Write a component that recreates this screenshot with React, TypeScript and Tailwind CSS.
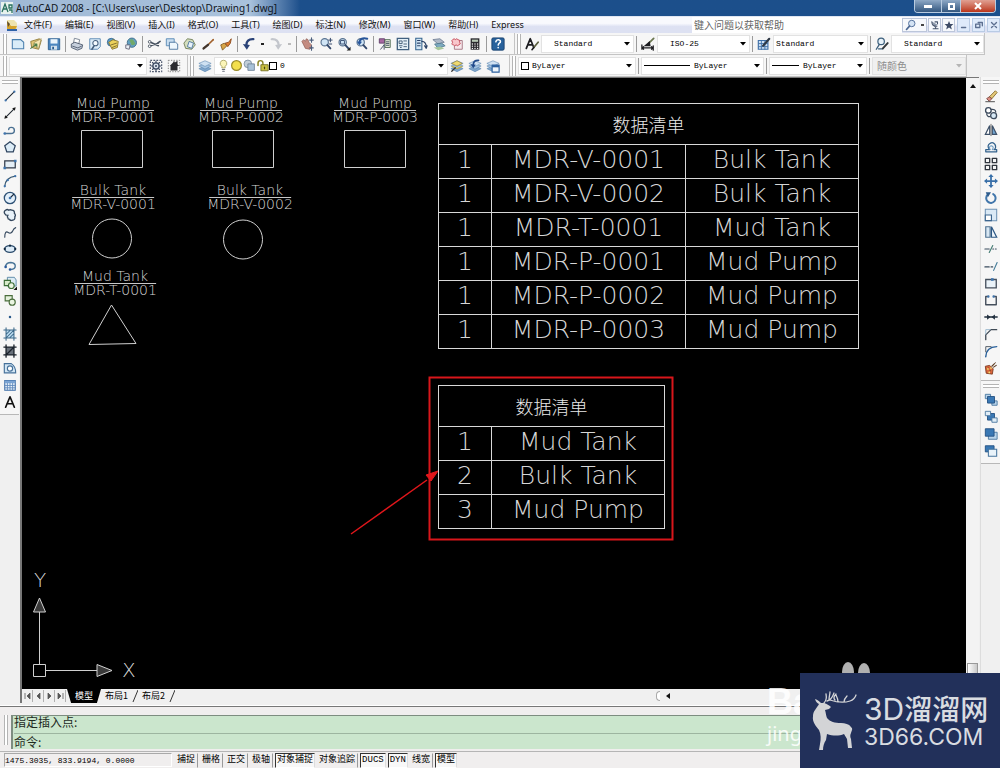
import type { ReactNode } from "react";

const P = "#2b3f63";
const B = "#3f74ad";

const stroke = (d: string, color = P, w = 1.4) => (
  <path d={d} fill="none" stroke={color} strokeWidth={w} strokeLinecap="round" strokeLinejoin="round" />
);

const lens = (
  <>
    <circle cx="6.5" cy="6" r="4.2" fill="#cfe4f5" stroke="#5a7390" strokeWidth="1.3" />
    {stroke("M9.6 9.2 13 13", "#33486b", 2.2)}
  </>
);

const layers = (
  <>
    <path d="M1 11 8 8l7 3-7 3.500z" fill="#7fa6cc" stroke="#4f7ba8" strokeWidth=".6" />
    <path d="M1 8 8 5l7 3-7 3.500z" fill="#a5c4e2" stroke="#4f7ba8" strokeWidth=".6" />
    <path d="M1 5 8 2l7 3-7 3.500z" fill="#cfe1f2" stroke="#4f7ba8" strokeWidth=".6" />
  </>
);

const icons: Record<string, ReactNode> = {
  new: <path d="M1.500 3h9.500l3.500 3v7.500h-13z" fill="#d9ecf8" stroke="#4a7fae" strokeWidth="1.2" />,
  open: (
    <>
      <path d="M2 5 12 2l2 2-3 10-8-2z" fill="#e3c979" stroke="#8d7733" />
      <path d="M6 6 14 2l-3 11-6-3z" fill="#f7e9b4" stroke="#9a8850" strokeWidth=".8" />
      {stroke("M2 13 9 8M9 8H6M9 8v3", "#4b7c46", 1.2)}
    </>
  ),
  save: (
    <>
      <path d="M1.500 2h13v12.500h-13z" fill="#4c86bf" stroke="#285b8e" />
      <path d="M4 2.500h8v5H4z" fill="#eaf4fb" />
      <path d="M4.500 10h7v4.500h-7z" fill="#d3e1ed" />
      <path d="M6 11h2v3H6z" fill="#285b8e" />
    </>
  ),
  print: (
    <>
      <path d="M5 1.500 11 3l-1 5-6-1z" fill="#fff" stroke="#6f7a8a" />
      <path d="m1.500 8 4-2 9 3-1 4-5 2-7-3z" fill="#c6cfdc" stroke="#4d586b" />
      {stroke("M3 10.500 9 12.500l4-2", "#4d586b", 1)}
    </>
  ),
  preview: (
    <>
      <path d="M2 2h12v9l-3 3H2z" fill="#dcecf8" stroke="#5283b0" />
      <circle cx="8.500" cy="7" r="3" fill="#f4fafe" stroke="#45607e" strokeWidth="1.200" />
      {stroke("M7 10 4.500 14", "#45607e", 1.8)}
    </>
  ),
  publish: (
    <>
      <circle cx="6" cy="6" r="4.500" fill="#5b9fd0" stroke="#39678e" />
      <path d="m3 6 5-3 6 2-1 7-6 2z" fill="#ebd15b" stroke="#84712c" />
      {stroke("M6 9 12 7M7 12l5-2", "#79662a", 1)}
    </>
  ),
  globe: (
    <>
      <circle cx="9" cy="6.500" r="5.300" fill="#63a0c2" stroke="#3d6a86" />
      <path d="M6 4q3-3 5 0t2 4q-4 3-5 0t-2-4z" fill="#71a96a" />
      <path d="m2 9 5 0-1 5-4-1z" fill="#e9eef4" stroke="#667" />
    </>
  ),
  cut: (
    <>
      {stroke("M4 6 13 10M4 10l9-3M12 7l3-2", "#444f5d", 1.7)}
      <circle cx="3" cy="5.500" r="1.500" fill="#fff" stroke="#444f5d" />
      <circle cx="3" cy="10.500" r="1.500" fill="#fff" stroke="#444f5d" />
    </>
  ),
  copy: (
    <>
      <path d="M1.500 2h9v8h-9z" fill="#c9def0" stroke="#5486b2" />
      <path d="M5 6h7l2.500 2v6H5z" fill="#eef7fd" stroke="#47719c" />
    </>
  ),
  paste: (
    <>
      <path d="m5 2 6 1 3 6-4 5-7-1-2-6z" fill="#d5dfbf" stroke="#6b7a53" />
      <path d="m7 5 5 2-2 6-5-2z" fill="#e8f3fb" stroke="#47719c" />
    </>
  ),
  brush: (
    <>
      {stroke("M14 3 9 8", "#a1612c", 1.8)}
      {stroke("M8 9 3 13", "#42342b", 2.8)}
    </>
  ),
  matchprop: (
    <>
      <path d="M2 9 6 7l3 3-5 5z" fill="#d8a648" stroke="#82602a" />
      <path d="m7 7 4-1 3-4-1 5-3 4z" fill="#df7e2e" stroke="#8b4a1e" />
    </>
  ),
  undo: (
    <>
      {stroke("M13 2.500Q5.500 2 5 9", "#2a4277", 2.6)}
      <path d="m1 8 8 1-3.500 5.500z" fill="#2a4277" />
    </>
  ),
  redo: (
    <>
      {stroke("M3 2.500Q10.500 2 11 9", "#c3c6cc", 2.4)}
      <path d="m15 8-8 1 3.500 5.500z" fill="#c3c6cc" />
    </>
  ),
  pan: (
    <>
      <path d="M1 5 3 3l2 2 1-3 2 1 1 3 3 3v3l-2 2-5-1-2-4z" fill="#c48c81" stroke="#8f5e56" strokeWidth=".8" />
      {stroke("M12 1v5M10 3.500h4M12 10v5M10 12.500h4", "#4d5f7d", 1.3)}
    </>
  ),
  zoomrt: (
    <>
      {lens}
      {stroke("M13 1.500v4M11 3.500h4M11.500 8h3", "#33486b", 1.1)}
    </>
  ),
  zoomwin: (
    <>
      {lens}
      {stroke("M4.500 4h4v4h-4z", "#33486b", 1)}
      <path d="m15.500 11v4.500H11z" fill="#222" />
    </>
  ),
  zoomprev: (
    <>
      {lens}
      {stroke("M14 2Q6 0 5 6", "#27559a", 2.2)}
      <path d="m2 5 6 .500-3 4z" fill="#27559a" />
    </>
  ),
  props: (
    <>
      <path d="M1.500 2h6v5h-6z" fill="#a668a0" stroke="#5f3e68" />
      <path d="M8 3h6v9H8z" fill="#e2ebd8" stroke="#4f6b52" />
      {stroke("M9.500 5.500h3M9.500 7.500h3M9.500 9.500h3M3 14l4-5M7 14V9", "#394759", 1)}
    </>
  ),
  dcenter: (
    <>
      <path d="M1.500 1.500h13v13h-13z" fill="#e3eff7" stroke="#41607f" strokeWidth="1.500" />
      {stroke("M4 4.500h3v3H4zM4 10h3M9 4.500h3M9 8h3M9 11h3M5 12h1", "#3a556f", 1)}
    </>
  ),
  palettes: (
    <>
      <path d="M2 1.500h7v13H2z" fill="#d2e5f4" stroke="#35648f" strokeWidth="1.200" />
      {stroke("M4 4h3M4 7h3M4 10h3M9 5q5 0 5 7M12 10l2 3 1-3", "#2d4468", 1.3)}
    </>
  ),
  sheets: (
    <>
      <path d="m1 3 8-1 5 4-7 2z" fill="#aeb9c8" stroke="#728096" />
      <path d="m3 8 8-1 4 3-8 3z" fill="#7daac0" stroke="#507a90" />
      <path d="m2 12 8-1 4 2-7 2z" fill="#a7c79c" />
    </>
  ),
  markup: (
    <>
      <path d="M5 4h9v10H5z" fill="#f6e8ec" stroke="#a1707e" />
      <path d="M3 3q2-2 3 0 2-2 3 0 3 0 2 3 2 2-1 3-1 2-3 0-2 2-3 0-3 0-1-3-2-2 0-3z" fill="#f8c6cb" stroke="#c24150" />
    </>
  ),
  calc: (
    <>
      <path d="M3 1.500h10v13H3z" fill="#2b2b30" />
      <path d="M4.500 3h7v2.500h-7z" fill="#b8c9b6" />
      {stroke("M5 8h0M8 8h0M11 8h0M5 10.500h0M8 10.500h0M11 10.500h0M5 13h0M8 13h0M11 13h0", "#fff", 1.5)}
    </>
  ),
  help: (
    <>
      <rect x="1" y="1" width="14" height="14" rx="1.500" fill="#28629c" stroke="#173f6c" />
      {stroke("M5.500 5.500q.500-2.500 3-2.300 3 .500 2 3-2 1.300-2.300 3M8.200 12v.300", "#fff", 1.8)}
    </>
  ),
  textstyle: (
    <>
      {stroke("M1.500 13 6 2l4 10M3.500 9h5", "#1c1c20", 2)}
      {stroke("M15 6 10 12", "#5c6040", 2)}
      {stroke("M10 12l-2 2.500", "#1c1c20", 1.8)}
    </>
  ),
  dimstyle: (
    <>
      {stroke("M1 9v5M14 10v5M1 12.500h13M3 11 1 12.500 3 14M12 11l2 1.500-2 1.500", "#1c1c20", 1.4)}
      {stroke("M14.500 1.500 9 7", "#6b7750", 2)}
      <path d="m3 10.500 7-6 1 6z" fill="#1c1c20" />
    </>
  ),
  tablestyle: (
    <>
      <path d="M1.500 4h11v10h-11z" fill="#cfe1f3" stroke="#3f70a8" strokeWidth="1.300" />
      {stroke("M2 7.500h10M2 11h10M5 4v10M9 4v10", "#3f70a8", 1)}
      {stroke("M14 2 7 10", "#2e3844", 2.4)}
    </>
  ),
  leaderstyle: (
    <>
      <circle cx="7" cy="5" r="3.700" fill="#e9f3fa" stroke="#3d607d" strokeWidth="1.400" />
      {stroke("M5 8.500 1.500 14M4 13.500h5", "#3d607d", 1.5)}
      {stroke("M14.500 7 9 13", "#33383c", 2.2)}
    </>
  ),
  gear: (
    <>
      <path d="M1.500 1.500h13v13h-13z" fill="none" stroke="#49536a" strokeDasharray="2 1.500" strokeWidth="1.300" />
      <circle cx="8" cy="8" r="3.600" fill="#dce4ee" stroke="#3d4a63" strokeWidth="1.500" />
      {stroke("M8 2.500v2M8 11.500v2M2.500 8h2M11.500 8h2M4 4l1.500 1.500M12 4l-1.500 1.500M4 12l1.500-1.500M12 12l-1.500-1.500", "#3d4a63", 1.3)}
      <circle cx="8" cy="8" r="1.200" fill="#3d4a63" />
    </>
  ),
  wshome: (
    <>
      <path d="M1.500 1.500h13v13h-13z" fill="none" stroke="#777" strokeDasharray="1.500 1.500" />
      <path d="M3 8 7 4l1-2 1 2 3-2v4l2 2h-2v5H4V8z" fill="#2b2b2f" />
    </>
  ),
  layers,
  layermake: (
    <>
      {layers}
      <path d="m2 5 6-3 6 3-6 3z" fill="#efd970" stroke="#8a7a2c" strokeWidth=".7" />
      <path d="m2 8.500 6 2.500 6-2.500" fill="none" stroke="#c7b34a" strokeWidth="1.500" />
      {stroke("M6 10 2 14", "#333", 1.4)}
    </>
  ),
  layerprev: (
    <>
      {layers}
      {stroke("M12 1.500Q6 1 6 7", "#234c8c", 2)}
      <path d="m3 6 6 .500-3 4z" fill="#234c8c" />
    </>
  ),
  layerstate: (
    <>
      {layers}
      <path d="M7 7h8v8H7z" fill="#eef6fc" stroke="#2a5f9e" strokeWidth="1.300" />
      <path d="M7 7h8v2.500H7z" fill="#2a5f9e" />
    </>
  ),
  bulb: (
    <>
      <path d="M8 1.500a4 4 0 0 1 2 7.500v2H6V9a4 4 0 0 1 2-7.500z" fill="#fbf5b8" stroke="#a19b58" />
      {stroke("M6.500 13h3M7 15h2", "#6a6f7c", 1.3)}
    </>
  ),
  sun: <circle cx="8" cy="8" r="6" fill="#f3df4c" stroke="#9b8c2a" strokeWidth="1.500" />,
  freeze: (
    <>
      <circle cx="6" cy="6" r="4.700" fill="#c1ced9" stroke="#73889b" />
      <path d="M6 6h8v8H6z" fill="#a9c2d9" stroke="#6a7f94" />
    </>
  ),
  lock: (
    <>
      {stroke("M2.500 8V5q0-3 3-3t3 3v2", "#8b8525", 1.8)}
      <path d="M6 7h9v7.500H6z" fill="#c9c043" stroke="#6c671e" />
      {stroke("M10.500 10v2", "#4b4814", 1.4)}
    </>
  ),
  line: (
    <>
      {stroke("M3 13 13 3", "#222a33", 1.3)}
      <circle cx="3" cy="13" r="1.300" fill={B} />
      <circle cx="13" cy="3" r="1.300" fill={B} />
    </>
  ),
  xline: (
    <>
      {stroke("M3 13 13 3", "#222a33", 1.3)}
      <path d="m1.500 14.500 1-4 3 3zM14.500 1.500l-1 4-3-3z" fill="#1a1a1a" />
    </>
  ),
  pline: (
    <>
      {stroke("M2 12h7q4 0 4-3.500T9.500 5q-3 0-3 2.500", "#4a7092", 1.6)}
      {stroke("M2 12h0", B, 3)}
    </>
  ),
  polygon: <path d="m8 2 6 4.500-2.300 7H4.300L2 6.500z" fill="#dcecf7" stroke="#2f4560" strokeWidth="1.400" />,
  rect: (
    <>
      <path d="M2 4.500h12v8H2z" fill="#e4eef6" stroke="#303a4a" strokeWidth="1.400" />
      <path d="M.500 11h3v3h-3zM12.500 3h3v3h-3z" fill={B} />
    </>
  ),
  arc: (
    <>
      {stroke("M2 14Q3 4 14 2.500", "#3a5a73", 1.5)}
      {stroke("M2 14h0M5.500 7h0M14 2.500h0", B, 2.6)}
    </>
  ),
  circle: (
    <>
      <circle cx="8" cy="8" r="6.500" fill="#e2effa" stroke="#2f5276" strokeWidth="1.500" />
      {stroke("M8 8 12 4", "#1d2c3e", 1.3)}
      {stroke("M8 8h0", B, 3)}
    </>
  ),
  cloud: (
    <path
      d="M3 2.500q2-1.500 3.500 0 2-1 3.500 0 3.500 0 3 3.500 2 2 .500 4 .500 4-3 4-2 1-3-1-2 0-2-2-1-1 0-2.500-3 0-3.500-2Q.500 4 3 2.500z"
      fill="#e8f1f8"
      stroke="#33465c"
      strokeWidth="1.500"
    />
  ),
  spline: stroke("M2 14Q2 6 6 8.500q3 2 5-1.500 1-3 3.500-4", "#384b60", 1.3),
  ellipse: (
    <>
      <ellipse cx="8" cy="8" rx="6" ry="3.800" fill="#dcebf7" stroke="#27486a" strokeWidth="1.500" />
      {stroke("M2 8h0M8 4.200h0M14 8h0", "#12283f", 2.6)}
    </>
  ),
  ellipsearc: (
    <>
      {stroke("M3 8q1-4 6-4 5 .500 5 4t-5 4", "#4a7597", 1.6)}
      {stroke("M3 9h0M8 12h0", "#2a5a9c", 3)}
    </>
  ),
  insert: (
    <>
      <path d="M5 1.500h8l2 3v7H5z" fill="#dcebf5" stroke="#5583a4" />
      <path d="M1.500 5h7v6h-7z" fill="#d8eacb" stroke="#3c6d37" strokeWidth="1.300" />
      <circle cx="9.500" cy="11" r="3.300" fill="#eaf5e2" stroke="#3c6d37" strokeWidth="1.300" />
      <path d="m16 12v4h-4z" fill="#111" />
    </>
  ),
  block: (
    <>
      <path d="M2.500 3h8v6h-8z" fill="#e4f1dc" stroke="#4a6d3c" strokeWidth="1.300" />
      <circle cx="10.500" cy="10.500" r="3.500" fill="#eaf5e2" stroke="#4a6d3c" strokeWidth="1.300" />
    </>
  ),
  point: <circle cx="8" cy="8" r="1.400" fill="#2a5a8c" />,
  hatch: (
    <>
      <path d="M3.500 3.500h9v9h-9z" fill="#bcdcf0" />
      {stroke("M3.500 1v14M12.500 1v14M1 3.500h14M1 12.500h14M4 8l4-4M4 12l8-8M8 12l4-4", "#3b6889", 1.2)}
    </>
  ),
  gradient: (
    <>
      <path d="M3.500 3.500h9v9h-9z" fill="#68707a" />
      {stroke("M3.500 1v14M12.500 1v14M1 3.500h14M1 12.500h14M4 12l8-8", "#1b222b", 1.5)}
    </>
  ),
  region: (
    <>
      <path d="M1.500 3h8q5 3 5 10.500h-13z" fill="#d3e6f4" stroke="#46719a" strokeWidth="1.300" />
      <circle cx="8" cy="8.500" r="3" fill="#fff" stroke="#46719a" strokeWidth="1.300" />
    </>
  ),
  table: (
    <>
      <path d="M2 3h12v11H2z" fill="#eaf3fb" stroke="#3f6ea6" strokeWidth="1.200" />
      <path d="M2 3h12v3H2z" fill="#7ba4d4" />
      {stroke("M2 8.500h12M2 11.200h12M5 6v8M8 6v8M11 6v8", "#5d87ba", 1)}
    </>
  ),
  mtext: stroke("M3 14 8 2l5 12M4.500 10h7", "#111", 1.9),
  erase: (
    <>
      <path d="m6 9 7-7 2 2-6 7z" fill="#e4c878" stroke="#816829" />
      <path d="m3 11 3-2 3 2-3 3z" fill="#de8f84" stroke="#7c4640" />
      {stroke("M2 14.500h10", "#3a3a3a", 1)}
    </>
  ),
  copyobj: (
    <>
      <circle cx="5" cy="5" r="3.200" fill="#fff" stroke="#3d4b5d" strokeWidth="1.500" />
      <circle cx="11" cy="11" r="3.400" fill="#d6e8f5" stroke="#3d4b5d" strokeWidth="1.500" />
      {stroke("M8 4q5-1 5.500 3M3 9q1 4 4 3", "#3d4b5d", 1.3)}
    </>
  ),
  mirror: (
    <>
      <path d="M6.500 3v10H1.500z" fill="#fff" stroke="#3d5068" strokeWidth="1.300" />
      <path d="M9.500 3v10h5z" fill="#6fa3cf" stroke="#3d5068" strokeWidth="1.300" />
      {stroke("M8 1.500v13", "#333", 0.8)}
    </>
  ),
  offset: (
    <>
      {stroke("M2 13.500h12.500v-2.500h-3q3-2 1-6-3-4-7 0-2 3 1 6H2z", "#32618c", 1.4)}
      {stroke("M7 11Q5 7 8.500 6.500 12 7.500 9.500 11", "#6a9ac3", 1.2)}
    </>
  ),
  array: stroke("M1.500 1.500h5v5h-5zM9.500 1.500h5v5h-5zM1.500 9.500h5v5h-5zM9.500 9.500h5v5h-5z", "#30353d", 1.5),
  move: (
    <>
      {stroke("M8 2v12M2 8h12", "#386fa8", 2)}
      <path d="m8 0 3 3.500H5zM8 16l3-3.500H5zM0 8l3.500-3v6zM16 8l-3.500-3v6z" fill="#386fa8" />
    </>
  ),
  rotate: (
    <>
      {stroke("M10.500 3.500A5.400 5.400 0 1 1 4.500 4", "#4176ab", 2.3)}
      <path d="M2 1.500h6L4.500 7z" fill="#2f5c8c" />
    </>
  ),
  scale: (
    <>
      <path d="M1.500 1.500h13v13h-13z" fill="#dae9f5" stroke="#6f93b5" strokeWidth="1.200" />
      <path d="M1.500 8h7v6.500h-7z" fill="#fff" stroke="#3d668e" strokeWidth="1.300" />
    </>
  ),
  stretch: (
    <>
      <path d="M2 2h5v12H2z" fill="#d8e7f3" stroke="#4f7191" strokeWidth="1.300" />
      <path d="M8.500 2 14.500 14h-6z" fill="#f1f7fc" stroke="#2d5884" strokeWidth="1.400" />
    </>
  ),
  trim: (
    <>
      {stroke("M1 8h5M10 8h1M13 8h1", "#394b5d", 1.2)}
      {stroke("M6 12 10 4", "#477e75", 1.3)}
    </>
  ),
  extend: (
    <>
      {stroke("M1 9h5M8 9h2", "#394b5d", 1.2)}
      {stroke("M11 13 15 4", "#477e9a", 1.3)}
    </>
  ),
  breakpt: (
    <>
      <path d="M2 4h12v9.500H2z" fill="#eaf2f8" stroke="#454f5c" strokeWidth="1.500" />
      <path d="M8 2.500h3v3H8z" fill={B} />
    </>
  ),
  break: (
    <>
      {stroke("M5 4H2v9.500h12V4h-3", "#454f5c", 1.6)}
      {stroke("M5 4h0M11 4h0", B, 2.800)}
    </>
  ),
  join: (
    <>
      {stroke("M1 8h14", "#22303f", 1.8)}
      <path d="m7.500 8-4-3v6zM8.500 8l4-3v6z" fill="#22303f" />
    </>
  ),
  chamfer: (
    <>
      {stroke("M2 14.500V9l6-6h6.500", "#404a55", 1.5)}
      {stroke("M2 8V3h5", "#93b2ca", 1)}
    </>
  ),
  fillet: (
    <>
      {stroke("M2 14.500Q2.500 3.500 14.500 3", "#29609a", 1.7)}
      {stroke("M2 9V3h6", "#404a55", 1)}
    </>
  ),
  explode: (
    <>
      <path d="m1.500 6 5-1 4 4-1 6-7-1z" fill="#d9663c" stroke="#7c3a20" />
      {stroke("M9 6 12 3M11 7l3-2M13 2h0M5 8h0M7 11h0", "#5c3b20", 1.3)}
      {stroke("M4.500 9h0M8 8h0M6 13h0", "#f5df70", 2)}
    </>
  ),
  front: (
    <>
      <path d="M1.500 1.500h6v5h-6zM9 9h6v5H9z" fill="#b9d4ea" stroke="#47759e" />
      <path d="M4 4h8v7.500H4z" fill="#3a78b4" stroke="#214f80" />
    </>
  ),
  back: (
    <>
      <path d="M4 4h8v7.500H4z" fill="#3a78b4" stroke="#214f80" />
      <path d="M1.500 1.500h6v5h-6zM9 9h6v5H9z" fill="#e0edf7" stroke="#47759e" />
    </>
  ),
  above: (
    <>
      <path d="M5 6h10v8H5z" fill="#b9d4ea" stroke="#47759e" />
      <path d="M1.500 2h10v8.500h-10z" fill="#3a78b4" stroke="#214f80" />
    </>
  ),
  below: (
    <>
      <path d="M1.500 2h10v7h-10z" fill="#3a78b4" stroke="#214f80" />
      <path d="M5 6h9.500v8H5z" fill="#e9f3fa" stroke="#47759e" strokeWidth="1.200" />
    </>
  ),
  search: (
    <>
      <circle cx="9" cy="6" r="4.300" fill="#d4e3f4" stroke="#54719c" strokeWidth="1.300" />
      {stroke("M6 9.500 2 14", "#4a6692", 2.200)}
    </>
  ),
  comm: (
    <>
      <path d="M2 2 13 8l-4 1-2 3z" fill="#8d99ab" />
      {stroke("M3 3q0 7 8 7M8 3h4v3M5 14h8M9 10v4", "#46536a", 1.7)}
    </>
  ),
  star: <path d="m8 1.500 2 4.700 5 .300-3.800 3.300L12.500 15 8 12l-4.500 3 1.300-5.200L1 6.500l5-.300z" fill="#3d4b66" />,
};

const Glyph = ({ name, size = "size-[14px]" }: { name: string; size?: string }) => (
  <svg viewBox="0 0 16 16" className={`${size} shrink-0`} aria-hidden="true">
    {icons[name]}
  </svg>
);

const Tool = ({ name, tall = false }: { name: string; tall?: boolean }) => (
  <button type="button" aria-label={name} className={`flex w-[18px] shrink-0 items-center justify-center ${tall ? "h-[17px]" : "h-[18px]"}`}>
    <Glyph name={name} />
  </button>
);

const Sep = () => <span className="mx-[2px] h-4 w-px shrink-0 bg-[#9b9b9b]" />;

const Grip = () => <span className="mx-[2px] h-5 w-1 shrink-0 border-x border-[#b4b4b4] bg-white" />;

const Caret = ({ dim = false }: { dim?: boolean }) => (
  <svg viewBox="0 0 6 4" className="pointer-events-none mr-[3px] h-1 w-1.5 shrink-0" aria-hidden="true">
    <path d="M0 0h6L3 3.500z" fill={dim ? "#b5b5b5" : "#000"} />
  </svg>
);

type ComboProps = { label: string; value: string; width: string; pad?: string; lead?: ReactNode; disabled?: boolean };

const Combo = ({ label, value, width, pad = "pl-0.5", lead, disabled }: ComboProps) => (
  <label className={`flex h-[18px] shrink-0 items-center border border-[#e2e2e2] ${disabled ? "bg-[#f0f0f0] text-[#8c8c8c]" : "bg-white text-black"} ${width} ${pad}`}>
    {lead}
    <select
      aria-label={label}
      disabled={disabled}
      className={`min-w-0 flex-1 appearance-none bg-transparent outline-none ${
        disabled ? "font-['Noto_Sans_CJK_SC',sans-serif] text-[10px]" : "font-['Liberation_Mono','Noto_Sans_CJK_SC',monospace] text-[8px] font-medium"
      }`}
    >
      <option>{value}</option>
    </select>
    <Caret dim={disabled} />
  </label>
);

const Swatch = () => <span className="mr-[3px] size-2 shrink-0 border border-black bg-white" />;
const Stroke = ({ width }: { width: string }) => <span className={`mr-1 h-px shrink-0 bg-black ${width}`} />;

const menus = ["文件(F)", "编辑(E)", "视图(V)", "插入(I)", "格式(O)", "工具(T)", "绘图(D)", "标注(N)", "修改(M)", "窗口(W)", "帮助(H)", "Express"];

const TitleBar = () => (
  <header className="flex h-4 items-center bg-gradient-to-r from-[#9fb9d6] via-[#a9c2dc] via-25% to-[#1c4f8b] to-30% pl-px">
    <svg viewBox="0 0 12 12" className="size-3 shrink-0" aria-hidden="true">
      <path d="M0 0h12v12H0z" fill="#e7f2ee" />
      <path d="m1 10 3-8 3 8M2 7h4M8 3h3v3H8zM8 8h3v3" fill="none" stroke="#28705f" strokeWidth="1.300" />
    </svg>
    <h1 className="ml-[3px] flex-1 font-['Noto_Sans',sans-serif] text-[10px] leading-4 whitespace-nowrap text-[#10151c]">
      AutoCAD 2008 - [C:\Users\user\Desktop\Drawing1.dwg]
    </h1>
    <div className="mr-1 flex h-[13px] self-start overflow-hidden rounded-b border border-t-0 border-[#b8cbe0]">
      <button type="button" aria-label="Minimize" className="flex w-[26px] items-center justify-center bg-gradient-to-b from-[#8fa9c6] to-[#33577f]">
        <span className="h-[3px] w-2 bg-white" />
      </button>
      <button type="button" aria-label="Restore" className="flex w-5 items-center justify-center border-x border-[#b8cbe0] bg-gradient-to-b from-[#8fa9c6] to-[#33577f]">
        <span className="size-[7px] border-2 border-white" />
      </button>
      <button type="button" aria-label="Close" className="flex w-[34px] items-center justify-center bg-gradient-to-b from-[#e0a092] to-[#b93217]">
        <svg viewBox="0 0 8 8" className="size-2" aria-hidden="true">
          <path d="m1 1 6 6M7 1 1 7" stroke="#fff" strokeWidth="2" />
        </svg>
      </button>
    </div>
  </header>
);

const MenuBar = () => (
  <nav className="flex h-[17px] items-center border-t border-[#dfe6f2] bg-gradient-to-b from-[#f8f9fd] from-40% to-[#dde1f2] to-60% font-['Noto_Sans','Noto_Sans_CJK_SC',sans-serif] text-[9px] leading-4 whitespace-nowrap text-[#111]">
    <svg viewBox="0 0 12 12" className="mr-1.5 ml-1.5 size-3 shrink-0" aria-hidden="true">
      <path d="M1 1h7l3 3v7H1z" fill="#eee3ae" />
      <path d="m1 2 4 5 6 0-2 4H1z" fill="#d6a32b" />
      <path d="M1 10h10v2H1z" fill="#2f62a8" />
      <path d="m1 2 3 3-2 3z" fill="#5b4b32" />
    </svg>
    <ul className="flex flex-1 gap-[13px]">
      {menus.map((m) => (
        <li key={m}>
          <button type="button">{m}</button>
        </li>
      ))}
    </ul>
    <input
      aria-label="键入问题以获取帮助"
      placeholder="键入问题以获取帮助"
      className="h-4 w-[210px] bg-white pl-0.5 font-['Noto_Sans_CJK_SC',sans-serif] text-[10px] outline-none placeholder:text-[#666]"
    />
    <div className="flex h-4 items-center gap-px">
      <button type="button" aria-label="Search" className="flex h-[14px] w-[25px] items-center gap-1 border border-[#bcc6da] bg-[#f6f8fc] pl-0.5">
        <Glyph name="search" size="size-3" />
        <span className="h-0.5 w-[3px] bg-[#444]" />
      </button>
      {["comm", "star"].map((n) => (
        <button key={n} type="button" aria-label={n} className="flex h-[14px] w-[13px] items-center justify-center border border-[#bcc6da] bg-[#f6f8fc]">
          <Glyph name={n} size="size-2.5" />
        </button>
      ))}
      {["M3 9h5", "M2 5h5v4H2zM5 3h5v4", "m3 3 6 6M9 3 3 9"].map((d) => (
        <button key={d} type="button" aria-label="Drawing window" className="ml-px flex h-[14px] w-[13px] items-center justify-center border border-[#b9cbe4] bg-[#dfeafa]">
          <svg viewBox="0 0 12 12" className="size-2.5" aria-hidden="true">
            {stroke(d, "#5d6f90", 1.6)}
          </svg>
        </button>
      ))}
    </div>
  </nav>
);

const tools = (names: string[]) => names.map((n) => <Tool key={n} name={n} />);
const barClass = "flex shrink-0 items-center border-r border-b border-[#c4c4c4] bg-[#f6f6f6]";

const Toolbars = () => (
  <div className="flex flex-col bg-[#f0f0f0]">
    <div className="flex h-[22px]">
      <div className={`${barClass} w-[515px] pl-px`}>
        <Grip />
        {tools(["new", "open", "save"])}
        <Sep />
        {tools(["print", "preview", "publish", "globe"])}
        <Sep />
        {tools(["cut", "copy", "paste", "brush", "matchprop"])}
        <Sep />
        <Tool name="undo" />
        <span className="mx-[3px] h-0.5 w-[3px] bg-[#222]" />
        <Tool name="redo" />
        <span className="mx-[3px] h-0.5 w-[3px] bg-[#bbb]" />
        <Sep />
        {tools(["pan", "zoomrt", "zoomwin", "zoomprev"])}
        <Sep />
        {tools(["props", "dcenter", "palettes", "sheets", "markup", "calc"])}
        <Sep />
        <Tool name="help" />
      </div>
      <div className={barClass}>
        <Grip />
        <Tool name="textstyle" />
        <Combo label="Text style" value="Standard" width="w-[93px]" pad="pl-3" />
        <Sep />
        <Tool name="dimstyle" />
        <Combo label="Dimension style" value="ISO-25" width="w-[93px]" pad="pl-3" />
        <Sep />
        <Tool name="tablestyle" />
        <Combo label="Table style" value="Standard" width="w-[95px]" pad="pl-0.5" />
        <Sep />
        <Tool name="leaderstyle" />
        <Combo label="Leader style" value="Standard" width="w-[93px]" pad="pl-3" />
      </div>
    </div>
    <div className="flex h-[22px]">
      <div className={`${barClass} w-[188px] pl-px`}>
        <Grip />
        <Combo label="Workspace" value="" width="w-[138px]" />
        {tools(["gear", "wshome"])}
      </div>
      <div className={`${barClass} w-[322px]`}>
        <Grip />
        <Tool name="layers" />
        <Combo
          label="Layer"
          value="0"
          width="w-[234px]"
          pad="pl-0.5"
          lead={
            <>
              {["bulb", "sun", "freeze", "lock"].map((n) => (
                <Glyph key={n} name={n} size="size-[13px]" />
              ))}
              <Swatch />
            </>
          }
        />
        {tools(["layermake", "layerprev", "layerstate"])}
      </div>
      <div className={barClass}>
        <Grip />
        <Combo label="Color" value="ByLayer" width="w-[118px]" lead={<Swatch />} />
        <Sep />
        <Combo label="Linetype" value="ByLayer" width="w-[123px]" lead={<Stroke width="w-[46px]" />} />
        <Sep />
        <Combo label="Lineweight" value="ByLayer" width="w-[98px]" lead={<Stroke width="w-[27px]" />} />
        <Sep />
        <Combo label="Plot style" value="随颜色" width="w-[94px]" pad="pl-1" disabled />
      </div>
    </div>
  </div>
);

const drawTools = ["line", "xline", "pline", "polygon", "rect", "arc", "circle", "cloud", "spline", "ellipse", "ellipsearc", "insert", "block", "point", "hatch", "gradient", "region", "table", "mtext"];
const modifyTools = ["erase", "copyobj", "mirror", "offset", "array", "move", "rotate", "scale", "stretch", "trim", "extend", "breakpt", "break", "join", "chamfer", "fillet", "explode"];
const orderTools = ["front", "back", "above", "below"];

const ToolColumn = ({ names }: { names: string[] }) => (
  <div className="flex flex-col items-center border-b border-[#b8b8b8] bg-[#f6f6f6] pt-[3px] pb-1">
    <span className="mb-[3px] h-1 w-4 border-y border-[#b4b4b4] bg-white" />
    {names.map((n) => (
      <Tool key={n} name={n} tall />
    ))}
  </div>
);

type Part = { x: number; y: number; title: string; tag: string };
const parts: Part[] = [
  { x: 91, y: 19, title: "Mud Pump", tag: "MDR-P-0001" },
  { x: 219, y: 19, title: "Mud Pump", tag: "MDR-P-0002" },
  { x: 353, y: 19, title: "Mud Pump", tag: "MDR-P-0003" },
  { x: 91, y: 106, title: "Bulk Tank", tag: "MDR-V-0001" },
  { x: 228, y: 106, title: "Bulk Tank", tag: "MDR-V-0002" },
  { x: 93, y: 192, title: "Mud Tank", tag: "MDR-T-0001" },
];

const fullList = [
  ["1", "MDR-V-0001", "Bulk Tank"],
  ["1", "MDR-V-0002", "Bulk Tank"],
  ["1", "MDR-T-0001", "Mud Tank"],
  ["1", "MDR-P-0001", "Mud Pump"],
  ["1", "MDR-P-0002", "Mud Pump"],
  ["1", "MDR-P-0003", "Mud Pump"],
];
const shortList = [
  ["1", "Mud Tank"],
  ["2", "Bulk Tank"],
  ["3", "Mud Pump"],
];

const cadFont = "font-['DejaVu_Sans','Noto_Sans_CJK_SC',sans-serif] font-extralight";

const DataTable = ({ rows, widths }: { rows: string[][]; widths: string[] }) => (
  <table className={`border-collapse text-center text-[25px] leading-[30px] text-[#d6d6d6] ${cadFont}`}>
    <thead>
      <tr className="h-[41px]">
        <th colSpan={widths.length} className="border border-[#d8d8d8] p-0 font-['Noto_Sans_CJK_SC',sans-serif] text-[18px] font-light text-[#e8e8e8]">
          数据清单
        </th>
      </tr>
    </thead>
    <tbody>
      {rows.map((r) => (
        <tr key={r.join()} className="h-[34px]">
          {r.map((c, i) => (
            <td key={i} className={`border border-[#d8d8d8] p-0 pb-[3px] whitespace-nowrap ${widths[i]}`}>
              {c}
            </td>
          ))}
        </tr>
      ))}
    </tbody>
  </table>
);

const Canvas = () => (
  <section aria-label="Drawing" className="relative flex-1 overflow-hidden bg-black">
    <svg className="absolute top-0 left-0" width="700" height="610" fill="none" stroke="#d0d0d0" aria-hidden="true">
      <path d="M59.500 52.500h61v37h-61zM190.500 52.500h61v37h-61zM322.500 52.500h61v37h-61z" />
      <circle cx="90" cy="160.500" r="19.500" />
      <circle cx="221" cy="161.500" r="19.500" />
      <path d="M89.500 227 67 266.500l47-1z" />
      <path d="M11.500 586.500h12v12h-12zM17.500 586V534M24 592.500h51" />
      <path d="m17.500 520 6 14h-12zM90 592.500l-15-6v12z" fill="#3a3a3a" />
      <path d="M407.500 299.500h243v162h-243z" stroke="#d8161b" strokeWidth="2" />
      <path d="M329 456 405 402" stroke="#e0161b" strokeWidth="1.500" />
      <path d="m416 393-7 10-5-6z" fill="#e0161b" stroke="#e0161b" />
    </svg>
    {parts.map((p) => (
      <div
        key={p.tag}
        className={`absolute flex -translate-x-1/2 flex-col items-center text-[14px] leading-[13px] whitespace-nowrap text-[#d6d6d6] ${cadFont}`}
        style={{ left: p.x, top: p.y }}
      >
        <span>{p.title}</span>
        <span className="h-px w-[82px] bg-[#c8c8c8]" />
        <span>{p.tag}</span>
      </div>
    ))}
    <span className={`absolute top-[490px] left-3 text-xl leading-6 text-[#d6d6d6] ${cadFont}`}>Y</span>
    <span className={`absolute top-[580px] left-[100px] text-xl leading-6 text-[#d6d6d6] ${cadFont}`}>X</span>
    <div className="absolute top-[25px] left-[416px]">
      <DataTable rows={fullList} widths={["w-[53px]", "w-[194px]", "w-[173px]"]} />
    </div>
    <div className="absolute top-[307px] left-[416px]">
      <DataTable rows={shortList} widths={["w-[53px]", "w-[173px]"]} />
    </div>
  </section>
);

const Slash = () => (
  <svg viewBox="0 0 6 12" className="h-3 w-1.5 shrink-0" aria-hidden="true">
    <path d="M6 0 1 12" stroke="#333" fill="none" />
  </svg>
);

const SheetTabs = () => (
  <div className="flex h-[14px] items-center bg-[#f0f0f0] font-['Noto_Sans_CJK_SC',sans-serif] text-[9px] leading-3 text-black">
    {["M2 1v6M7 1 4 4l3 3z", "M6 1 3 4l3 3z", "m3 1 3 3-3 3z", "M7 1v6M2 1l3 3-3 3z"].map((d) => (
      <button key={d} type="button" aria-label="Scroll tabs" className="flex h-3 w-[11px] items-center justify-center border-r border-[#b0b0b0]">
        <svg viewBox="0 0 9 8" className="h-2 w-[9px]" aria-hidden="true">
          <path d={d} fill="#555" stroke="#555" strokeWidth=".800" />
        </svg>
      </button>
    ))}
    <button type="button" className="ml-px h-[14px] w-[34px] bg-black text-white [clip-path:polygon(0_0,100%_0,88%_100%,12%_100%)]">
      模型
    </button>
    <button type="button" className="ml-1 whitespace-nowrap">布局1</button>
    <span className="w-1" />
    <Slash />
    <button type="button" className="ml-1 whitespace-nowrap">布局2</button>
    <span className="w-1" />
    <Slash />
    <div className="ml-auto flex h-[13px] w-[323px] items-center gap-1.5">
      <span className="h-2.5 w-1 rounded-l border border-r-0 border-[#aaa] bg-white" />
      <svg viewBox="0 0 4 6" className="h-1.5 w-1" aria-hidden="true">
        <path d="M4 0v6L0 3z" fill="#111" />
      </svg>
    </div>
  </div>
);

const modes = [
  { t: "捕捉" },
  { t: "栅格" },
  { t: "正交" },
  { t: "极轴" },
  { t: "对象捕捉", on: true },
  { t: "对象追踪" },
  { t: "DUCS", on: true },
  { t: "DYN", on: true },
  { t: "线宽" },
  { t: "模型", on: true },
];

const Footer = () => (
  <footer className="mt-0.5 border-t border-white bg-[#f0eeee]">
    <div className="flex border-t border-[#777] pt-2 pb-0.5 pl-1">
      <span className="mr-[3px] mb-1 w-1 border-x border-[#b4b4b4] bg-white" />
      <div className="flex-1 border-t border-l-2 border-[#7d8d80] bg-[#cbe6cd] pl-px font-['Noto_Sans_CJK_SC',sans-serif] text-xs text-[#1d2a1e]">
        <p className="h-[18px] border-b border-[#9db5a0] leading-3 whitespace-nowrap">指定插入点:</p>
        <label className="flex h-[15px] items-center leading-4">
          <span className="whitespace-nowrap">命令:</span>
          <input aria-label="命令" className="h-[15px] min-w-0 flex-1 bg-transparent outline-none" />
        </label>
      </div>
    </div>
    <div className="flex h-[17px] items-center border-t border-[#b5b5b5]">
      <output className="mr-[3px] ml-1 h-[14px] w-[168px] border border-[#a9a9a9] border-r-white border-b-white font-['Liberation_Mono',monospace] text-[8px] leading-[13px] whitespace-nowrap text-black">
        1475.3035, 833.9194, 0.0000
      </output>
      <div className="flex gap-[2px] font-['Liberation_Mono','Noto_Sans_CJK_SC',monospace] text-[9px] leading-[13px] text-black">
        {modes.map((m) => (
          <button
            key={m.t}
            type="button"
            aria-pressed={!!m.on}
            className={`h-[15px] border px-px whitespace-nowrap ${
              m.on ? "border-[#333] border-r-[#ddd] border-b-white bg-[#f8f8f8]" : "border-transparent border-r-[#9a9a9a] pr-0.5"
            }`}
          >
            {m.t}
          </button>
        ))}
      </div>
    </div>
  </footer>
);

const Badge = () => (
  <aside className="absolute right-0 bottom-0 flex h-[95px] w-[200px] items-center bg-[#22305a] pl-3 text-[#d9dce1]">
    <svg viewBox="0 0 46 60" className="h-[60px] w-[46px] shrink-0" aria-hidden="true">
      <path
        d="M3 8c3 1 4 2 6 4l3 0c3 1 5 2 7 4l-2 2-4 1c1 3 1 6 2 8 3 4 8 5 14 5 4 0 8 1 10 4 2 2 1 3 0 6-1 2-1 4 0 6l1 9-4 0-1-9-3-5c-5 2-11 2-17 0l-1 6c-2 3-3 6-3 10H7l1-6c1-5 1-10-1-14-3-4-7-8-6-14 0-5 4-8 6-12C5 12 4 11 3 8z"
        fill="#d3d4d6"
      />
      <path
        d="M12 12c2-2 3-4 2-9M15 10c4-1 6-5 7-8M17 9c0-3 1-6 1-8M18 9c6 2 14 3 20 1 3-1 5-3 6-6M26 11c0-3-1-5-2-7M32 11c0-3 1-4 3-6M23 9c-2-2-1-4 1-6"
        fill="none"
        stroke="#d3d4d6"
        strokeWidth="1.300"
        strokeLinecap="round"
      />
    </svg>
    <div className="ml-1.5 whitespace-nowrap">
      <p className="font-['Inter','Noto_Sans_CJK_SC',sans-serif] text-[28px] leading-8 font-medium">
        <span className="text-[30px] font-normal">3D</span>溜溜网
      </p>
      <p className="font-['Inter',sans-serif] text-[23px] leading-[22px]">3D66.COM</p>
    </div>
  </aside>
);

export default function App() {
  return (
    <div className="relative flex min-h-screen flex-col overflow-hidden bg-[#f0f0f0]">
      <TitleBar />
      <MenuBar />
      <Toolbars />
      <main className="flex flex-1">
        <div className="w-[19px] shrink-0">
          <ToolColumn names={drawTools} />
        </div>
        <div className="ml-px flex min-w-0 flex-1 flex-col border-t border-l-2 border-[#777]">
          <div className="flex flex-1">
            <Canvas />
            <div className="flex w-[13px] shrink-0 flex-col items-center justify-between bg-[#f3f3f3] pt-1.5">
              <svg viewBox="0 0 6 4" className="h-1 w-1.5" aria-hidden="true">
                <path d="M3 0l3 4H0z" fill="#111" />
              </svg>
              <span className="h-[26px] w-[11px] border border-[#999] bg-gradient-to-r from-[#fff] to-[#c9c9c9]" />
            </div>
          </div>
          <SheetTabs />
        </div>
        <div className="ml-px flex w-5 shrink-0 flex-col border-l border-[#ddd]">
          <ToolColumn names={modifyTools} />
          <ToolColumn names={orderTools} />
        </div>
      </main>
      <Footer />
      <div className="absolute right-0 bottom-0 h-[110px] w-[235px] overflow-hidden">
        <svg viewBox="0 0 32 20" className="absolute top-1 left-[76px] h-5 w-8" aria-hidden="true">
          <ellipse cx="7" cy="10" rx="6" ry="10" fill="#b0b0b0" />
          <ellipse cx="23" cy="11" rx="6" ry="10" fill="#b0b0b0" />
        </svg>
        <p className="absolute top-[26px] left-0.5 font-['Liberation_Sans',sans-serif] text-[36px] leading-9 font-bold text-white/85">Baidu</p>
        <p className="absolute top-16 left-0.5 font-['Noto_Sans',sans-serif] text-xl leading-6 text-white/85">jingyan</p>
        <Badge />
      </div>
    </div>
  );
}
